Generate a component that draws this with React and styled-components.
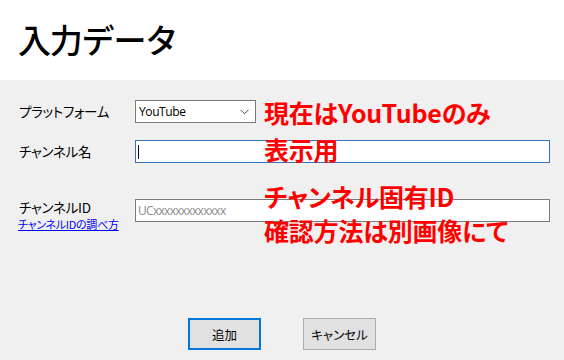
import React from 'react'
import styled, { createGlobalStyle } from 'styled-components'

const GlobalStyle = createGlobalStyle`
  html, body {
    margin: 0;
    padding: 0;
    background: #f0f0f0;
  }
  body {
    font-family: "Noto Sans CJK JP", "Noto Sans", sans-serif;
    color: #000;
  }
`

const fields = [
    { label: 'プラットフォーム', kind: 'select', value: 'YouTube', top: 20 },
    { label: 'チャンネル名', kind: 'text', focused: true, top: 17 },
    { label: 'チャンネルID', kind: 'text', placeholder: 'UCxxxxxxxxxxxxx', link: 'チャンネルIDの調べ方', top: 36 },
]

const notes = [
    { text: '現在はYouTubeのみ', top: 17 },
    { text: '表示用', top: 54 },
    { text: 'チャンネル固有ID', top: 101 },
    { text: '確認方法は別画像にて', top: 135 },
]

const App = () => {
    return (
        <>
            <GlobalStyle />
            <Window>
                <Header>
                    <Title>入力データ</Title>
                </Header>
                <Body>
                    <Form>
                        {fields.map((f) => (
                            <Row key={f.label} $top={f.top}>
                                <LabelCell>
                                    <Label $compact={!!f.link}>{f.label}</Label>
                                    {f.link && <HelpLink href="#">{f.link}</HelpLink>}
                                </LabelCell>
                                {f.kind === 'select' ? (
                                    <Select>
                                        <SelectValue>{f.value}</SelectValue>
                                        <svg width="9" height="6" viewBox="0 0 9 6">
                                            <path d="M0.5 0.8 L4.5 4.8 L8.5 0.8" fill="none" stroke="#444" strokeWidth="1" />
                                        </svg>
                                    </Select>
                                ) : (
                                    <TextBox $focused={f.focused}>
                                        {f.focused && <Caret />}
                                        {f.placeholder && <Placeholder>{f.placeholder}</Placeholder>}
                                    </TextBox>
                                )}
                            </Row>
                        ))}
                        {notes.map((n) => (
                            <Note key={n.text} style={{ top: n.top }}>{n.text}</Note>
                        ))}
                    </Form>
                    <Buttons>
                        <Button $primary>追加</Button>
                        <Button>キャンセル</Button>
                    </Buttons>
                </Body>
            </Window>
        </>
    )
}

export default App


const Window = styled.div`
    width: 564px;
    height: 360px;
    display: flex;
    flex-direction: column;
    overflow: hidden;
`

const Header = styled.div`
    height: 80px;
    background: #fff;
    display: flex;
    align-items: center;
    padding-left: 18px;
    box-sizing: border-box;
`

const Title = styled.h1`
    margin: 0;
    font-size: 33px;
    font-weight: 500;
    line-height: 1;
    letter-spacing: -1.2px;
    padding-bottom: 2px;
`

const Body = styled.div`
    flex: 1;
    background: #f0f0f0;
    display: flex;
    flex-direction: column;
`

const Form = styled.div`
    position: relative;
    display: flex;
    flex-direction: column;
    padding-left: 19px;
`

const Row = styled.div`
    display: flex;
    align-items: flex-start;
    margin-top: ${p => p.$top}px;
`

const LabelCell = styled.div`
    width: 116px;
    display: flex;
    flex-direction: column;
`

const Label = styled.span`
    font-size: 13.5px;
    line-height: ${p => (p.$compact ? '17px' : '23px')};
    font-feature-settings: "palt";
    letter-spacing: -0.3px;
    white-space: nowrap;
`

const HelpLink = styled.a`
    font-size: 11px;
    line-height: 16px;
    color: #0000ff;
    text-decoration: underline;
    font-feature-settings: "palt";
    letter-spacing: -0.3px;
    margin-left: -1px;
    white-space: nowrap;
`

const Select = styled.div`
    width: 121px;
    height: 23px;
    box-sizing: border-box;
    border: 1px solid #7a7a7a;
    background: #fff;
    display: flex;
    align-items: center;
    justify-content: space-between;
    padding: 0 6px 0 3px;
`

const SelectValue = styled.span`
    font-family: "Open Sans", "Noto Sans", sans-serif;
    font-size: 12px;
    letter-spacing: -0.4px;
    color: #000;
`

const TextBox = styled.div`
    width: 415px;
    height: 23px;
    box-sizing: border-box;
    border: 1px solid ${p => (p.$focused ? '#3574b6' : '#7a7a7a')};
    background: #fff;
    display: flex;
    align-items: center;
    padding-left: 2px;
`

const Caret = styled.span`
    width: 1px;
    height: 14px;
    background: #000;
`

const Placeholder = styled.span`
    font-family: "Open Sans", "Noto Sans", sans-serif;
    font-size: 12px;
    color: #8c8c8c;
    letter-spacing: -0.7px;
`

const Note = styled.div`
    position: absolute;
    left: 264px;
    font-size: 25px;
    font-weight: 700;
    line-height: 30px;
    color: #ff0000;
    font-feature-settings: "palt";
    letter-spacing: -0.2px;
    white-space: nowrap;
`

const Buttons = styled.div`
    display: flex;
    gap: 42px;
    padding-left: 188px;
    margin-top: 86px;
`

const Button = styled.button`
    width: 73px;
    height: 32px;
    box-sizing: border-box;
    background: #e1e1e1;
    border: ${p => (p.$primary ? '2px solid #0078d7' : '1px solid #adadad')};
    font-family: "Noto Sans CJK JP", "Noto Sans", sans-serif;
    font-size: 12.5px;
    font-feature-settings: "palt";
    color: #000;
    padding: 0;
`
